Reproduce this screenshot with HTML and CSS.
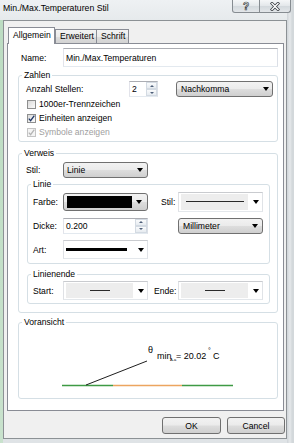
FILE: index.html
```html
<!DOCTYPE html>
<html lang="de">
<head>
    <meta charset="UTF-8">
    <title>Min./Max.Temperaturen Stil</title>
    <link rel="stylesheet" href="styles.css">
</head>
<body>

<div class="window">
    <div class="titlebar">
        <span class="title">Min./Max.Temperaturen Stil</span>
        <div class="caption">
            <span class="cap-btn help">?</span>
            <span class="cap-btn close">
                <svg width="10" height="9" viewBox="0 0 10 9">
                    <path d="M2 1.5 L8 7.5 M8 1.5 L2 7.5" stroke="#3a3f44" stroke-width="3" stroke-linecap="square"/>
                    <path d="M2 1.5 L8 7.5 M8 1.5 L2 7.5" stroke="#fff" stroke-width="1.4" stroke-linecap="square"/>
                </svg>
            </span>
        </div>
    </div>

    <div class="client">
        <!-- tab strip -->
        <div class="tabs">
            <span class="tab active">Allgemein</span>
            <span class="tab">Erweitert</span>
            <span class="tab">Schrift</span>
        </div>

        <div class="panel">
            <div class="name-row">
                <label>Name:</label>
                <div class="textbox name-box">Min./Max.Temperaturen</div>
            </div>

            <fieldset class="group zahlen">
                <legend>Zahlen</legend>
                <div class="row digits">
                    <span class="lbl">Anzahl Stellen:</span>
                    <div class="textbox spin small">
                        <span class="val">2</span>
                        <span class="spin-btns"><i class="up"></i><i class="down"></i></span>
                    </div>
                    <div class="combo btn nachkomma">Nachkomma<i class="arrow"></i></div>
                </div>
                <div class="check"><span class="box"></span>1000er-Trennzeichen</div>
                <div class="check"><span class="box"><svg width="7" height="7" viewBox="0 0 7 7"><path d="M0.8 3.6 L2.6 5.6 L6.3 0.6" fill="none" stroke="#1d3566" stroke-width="1.3"/></svg></span>Einheiten anzeigen</div>
                <div class="check disabled"><span class="box"><svg width="7" height="7" viewBox="0 0 7 7"><path d="M0.8 3.6 L2.6 5.6 L6.3 0.6" fill="none" stroke="#b4b4b4" stroke-width="1.3"/></svg></span>Symbole anzeigen</div>
            </fieldset>

            <fieldset class="group verweis">
                <legend>Verweis</legend>
                <div class="row stil-row">
                    <span class="lbl">Stil:</span>
                    <div class="combo btn linie">Linie<i class="arrow"></i></div>
                </div>

                <fieldset class="group inner linie-group">
                    <legend>Linie</legend>
                    <div class="grid linie-grid">
                        <span>Farbe:</span>
                        <div class="combo btn color"><span class="swatch"></span><i class="arrow"></i></div>
                        <span></span>
                        <span>Stil:</span>
                        <div class="combo flat style"><span class="well"><span class="stroke thin"></span></span><i class="arrow"></i></div>

                        <span>Dicke:</span>
                        <div class="textbox spin wide">
                            <span class="val">0.200</span>
                            <span class="spin-btns"><i class="up"></i><i class="down"></i></span>
                        </div>
                        <div class="combo btn millimeter">Millimeter<i class="arrow"></i></div>

                        <span>Art:</span>
                        <div class="combo flat art"><span class="stroke thick"></span><i class="arrow"></i></div>
                    </div>
                </fieldset>

                <fieldset class="group inner ende-group">
                    <legend>Linienende</legend>
                    <div class="grid ende-grid">
                        <span>Start:</span>
                        <div class="combo flat end"><span class="well"><span class="stroke short"></span></span><i class="arrow"></i></div>
                        <span></span>
                        <span>Ende:</span>
                        <div class="combo flat end"><span class="well"><span class="stroke short"></span></span><i class="arrow"></i></div>
                    </div>
                </fieldset>
            </fieldset>

            <fieldset class="group voransicht">
                <legend>Voransicht</legend>
                <svg class="preview" width="258" height="70" viewBox="0 0 258 70">
                    <line x1="43" y1="57.5" x2="94" y2="57.5" stroke="#3e9a44" stroke-width="1.3"/>
                    <line x1="94" y1="57.5" x2="163" y2="57.5" stroke="#eca55f" stroke-width="1.3"/>
                    <line x1="163" y1="57.5" x2="214" y2="57.5" stroke="#3e9a44" stroke-width="1.3"/>
                    <line x1="67" y1="57" x2="128" y2="33" stroke="#1e1e1e" stroke-width="1"/>
                    <text x="129" y="25" class="pv">θ</text>
                    <text x="138" y="31" class="pv">min</text>
                    <text x="151" y="33" class="pv sub">A-a</text>
                    <text x="157" y="31" class="pv">= 20.02</text>
                    <text x="189" y="25" class="pv deg">°</text>
                    <text x="194" y="31" class="pv">C</text>
                </svg>
            </fieldset>
        </div>

        <div class="footer">
            <span class="button ok">OK</span>
            <span class="button cancel">Cancel</span>
        </div>
    </div>
</div>

</body>
</html>
```

FILE: styles.css
```css
* {
    box-sizing: border-box;
}

body {
    margin: 0;
    font-family: "Liberation Sans", Arial, sans-serif;
    font-size: 8.6px;
    color: #000;
    background: #dde1e4;
}

/* Window frame (aero glass) */
.window {
    width: 294px;
    height: 443px;
    overflow: hidden;
    background:
        linear-gradient(#bcdcc2, #c9e2cd) 0 20px / 3px 100% no-repeat,
        linear-gradient(to right, transparent 287px, #cfd4d8 287px, #e6e9eb 290px, #d3d8db 292px),
        linear-gradient(#eef1f3 0, #e6eaec 20px, #dfe3e6 100%);
}

.titlebar {
    height: 20px;
    display: flex;
    align-items: flex-start;
}

.title {
    margin: 3px 0 0 3px;
    font-size: 8.7px;
    line-height: 11px;
}

.caption {
    display: flex;
    margin-left: auto;
    margin-right: 3px;
}

.cap-btn {
    height: 13px;
    display: flex;
    align-items: center;
    justify-content: center;
    border: 1px solid #868c91;
    border-top: none;
    background: linear-gradient(#f5f7f8, #e3e7ea 50%, #d3d9dd 51%, #e2e6e9);
}

.cap-btn.help {
    width: 28px;
    border-radius: 0 0 0 3px;
    color: #fff;
    font-weight: bold;
    font-size: 10px;
    -webkit-text-stroke: 0.7px #3a3f44;
}

.cap-btn.close {
    width: 31px;
    border-left: none;
    border-radius: 0 0 3px 0;
}

/* Dialog client area */
.client {
    width: 284px;
    height: 419px;
    margin-left: 3px;
    border: 1px solid #8c9195;
    background: #f0f0f0;
}

.tabs {
    display: flex;
    align-items: flex-end;
    height: 22px;
    padding-left: 4px;
}

.tab {
    height: 14px;
    padding-left: 4px;
    border: 1px solid #898c95;
    border-bottom: none;
    background: linear-gradient(#f3f3f3, #ebebeb 50%, #dedede 51%, #d2d2d2);
    line-height: 13px;
}

.tab:nth-child(1) { width: 47px; }
.tab:nth-child(2) { width: 42px; }
.tab:nth-child(3) { width: 32px; border-left: none; }

.tab.active {
    position: relative;
    height: 17px;
    margin-bottom: -1px;
    background: #fff;
    line-height: 15px;
}

.panel {
    width: 277px;
    height: 368px;
    margin-left: 3px;
    padding: 4px 5px 0 10px;
    border: 1px solid #898c95;
    background: #fff;
}

.name-row {
    display: flex;
    align-items: center;
    height: 19px;
}

.name-row label {
    width: 45px;
    padding-left: 3px;
}

.textbox {
    display: flex;
    align-items: center;
    border: 1px solid;
    border-color: #abadb3 #dbdfe6 #e3e9ef #e2e3ea;
    background: #fff;
    padding-left: 2px;
}

.name-box {
    width: 215px;
    height: 19px;
}

/* Group boxes */
.group {
    margin: 0;
    padding: 0 4px 2px 7px;
    border: 1px solid #d5dfe5;
    border-radius: 3px;
    min-width: 0;
}

.group legend {
    margin-left: -4px;
    padding: 0 2px;
    line-height: 12px;
}

.zahlen {
    margin-top: 2px;
}

.row {
    display: flex;
    align-items: center;
}

.digits {
    height: 16px;
}

.digits .lbl {
    width: 103px;
}

.spin {
    padding-right: 0;
}

.spin .val {
    flex: 1;
}

.spin.small {
    width: 29px;
    height: 16px;
}

.spin.wide {
    width: 85px;
    height: 16px;
    padding-left: 2px;
}

.spin-btns {
    display: flex;
    flex-direction: column;
    align-self: stretch;
    width: 11px;
}

.spin.wide .spin-btns {
    width: 12px;
}

.spin-btns i {
    flex: 1;
    display: flex;
    align-items: center;
    justify-content: center;
    border: 1px solid #d3dae2;
    background: linear-gradient(#fafbfc, #e6ebf0);
}

.spin-btns i.up::after {
    content: "";
    border-left: 2px solid transparent;
    border-right: 2px solid transparent;
    border-bottom: 2px solid #4d5e78;
}

.spin-btns i.down::after {
    content: "";
    border-left: 2px solid transparent;
    border-right: 2px solid transparent;
    border-top: 2px solid #4d5e78;
}

/* Combo boxes */
.combo {
    display: flex;
    align-items: center;
    justify-content: space-between;
    padding: 0 4px 0 3px;
}

.combo.btn {
    border: 1px solid #707070;
    border-radius: 3px;
    background: linear-gradient(#f2f2f2, #ebebeb 48%, #dddddd 52%, #cfcfcf);
}

.arrow {
    width: 0;
    height: 0;
    border-left: 3px solid transparent;
    border-right: 3px solid transparent;
    border-top: 4px solid #000;
}

.nachkomma {
    width: 97px;
    height: 16px;
    margin-left: 18px;
    padding-left: 4px;
    padding-right: 3px;
}

.check {
    display: flex;
    align-items: center;
    height: 14px;
    margin-left: 1px;
}

.box {
    display: flex;
    align-items: center;
    justify-content: center;
    width: 9px;
    height: 9px;
    margin-right: 3px;
    border: 1px solid #8e8f8f;
    background: linear-gradient(135deg, #dadada, #fbfbfb);
}

.check.disabled {
    color: #a0a0a0;
}

.check.disabled .box {
    border-color: #c4c4c4;
    background: #f4f4f4;
}

.verweis {
    margin-top: 5px;
    padding: 0 7px 8px 7px;
}

.stil-row {
    height: 16px;
    margin-top: 3px;
}

.stil-row .lbl {
    width: 37px;
}

.linie {
    width: 85px;
    height: 16px;
}

.group.inner {
    padding: 1px 6px 3px 5px;
}

.group.inner legend {
    margin-left: -2px;
}

.linie-group {
    margin-left: 1px;
}

.grid {
    display: grid;
    align-items: center;
}

.linie-grid {
    grid-template-columns: 30px 85px 13px 17px 85px;
    grid-auto-rows: 21px;
    row-gap: 3px;
}

.millimeter {
    grid-column: 5;
    height: 16px;
    padding-left: 4px;
}

.color {
    height: 18px;
    padding-right: 5px;
}

.swatch {
    width: 65px;
    height: 12px;
    background: #000;
}

.combo.flat {
    border: 1px solid;
    border-color: #c9cbcf #e0e3e7 #e3e7eb #dfe1e5;
    background: #fff;
    padding: 0 3px 0 2px;
}

.well {
    display: flex;
    align-items: center;
    justify-content: center;
    align-self: stretch;
    margin: 1px 0;
    background: #ededed;
}

.style {
    height: 20px;
}

.style .well {
    width: 67px;
}

.stroke {
    display: block;
    background: #2a2a2a;
}

.stroke.thin {
    width: 58px;
    height: 1px;
}

.art {
    height: 19px;
    padding-left: 4px;
}

.stroke.thick {
    width: 61px;
    height: 3px;
    background: #000;
}

.ende-group {
    margin: 4px 0 0 1px;
    padding-bottom: 4px;
}

.ende-grid {
    grid-template-columns: 30px 85px 6px 24px 85px;
    grid-auto-rows: 19px;
}

.end {
    height: 19px;
}

.end .well {
    width: 67px;
}

.stroke.short {
    width: 20px;
    height: 1px;
}

.voransicht {
    margin-top: 3px;
    padding: 0;
}

.voransicht legend {
    margin-left: 3px;
}

.preview {
    display: block;
}

.pv {
    font-family: "Liberation Sans", Arial, sans-serif;
    font-size: 9px;
    fill: #000;
}

.pv.sub {
    font-size: 4px;
}

.pv.deg {
    font-size: 7px;
}

/* Dialog buttons */
.footer {
    display: flex;
    justify-content: flex-end;
    gap: 6px;
    margin-top: 6px;
    padding-right: 1px;
}

.button {
    display: flex;
    align-items: center;
    justify-content: center;
    height: 17px;
    border: 1px solid #707070;
    border-radius: 3px;
    background: linear-gradient(#f2f2f2, #ebebeb 48%, #dddddd 52%, #cfcfcf);
}

.button.ok { width: 59px; }
.button.cancel { width: 58px; }
```
